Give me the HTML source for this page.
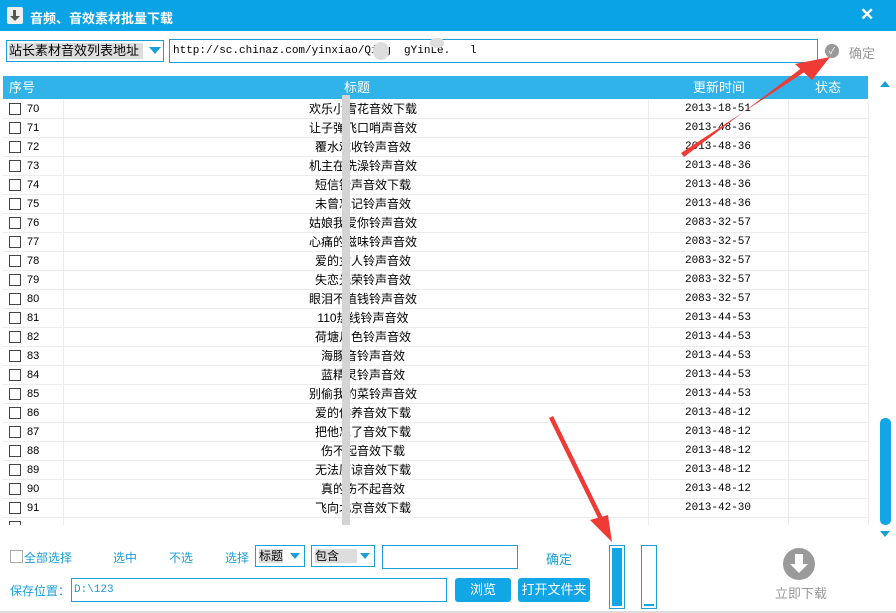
<!DOCTYPE html>
<html><head><meta charset="utf-8"><style>
*{margin:0;padding:0;box-sizing:border-box}
body{width:896px;height:613px;overflow:hidden;background:#fff;font-family:"Liberation Sans","Noto Sans CJK SC",sans-serif;font-size:12px;position:relative;color:#000}
.a{position:absolute}
.title{left:0;top:0;width:896px;height:31px;background:#0aa3e6;color:#fff;font-weight:bold;font-size:13px}
.row{position:absolute;left:3px;width:865px;height:19px;border-bottom:1px solid #ececec;line-height:19px;font-size:12px}
.cb{position:absolute;left:6px;top:3px;width:12px;height:12px;border:1px solid #444;background:#fff}
.num{position:absolute;left:24px;font-family:"Liberation Sans",sans-serif;font-size:11px}
.t{position:absolute;left:260px;width:200px;text-align:center}
.tm{position:absolute;left:645px;width:140px;text-align:center;font-family:"Liberation Mono",monospace;font-size:11px}
.blue{color:#1a9fd8}
.btn{background:#12a6e6;color:#fff;border-radius:3px;text-align:center;line-height:24px;font-size:13px}
</style></head><body>
<div class="a title">
 <div class="a" style="left:7px;top:7px;width:16px;height:17px;background:#eee;border-radius:2px"><div class="a" style="left:6px;top:3px;width:3px;height:7px;background:#555"></div><div class="a" style="left:3px;top:9px;border:5px solid transparent;border-top:5px solid #555;width:0;height:0"></div></div>
 <div class="a" style="left:30px;top:8px">音频、音效素材批量下载</div>
 <div class="a" style="left:860px;top:5px;font-size:17px">✕</div>
</div>
<div class="a" style="left:6px;top:40px;width:158px;height:22px;border:1px solid #1a9fd8"></div>
<div class="a" style="left:9px;top:43px;width:134px;height:16px;background:#ddd;font-size:13px;line-height:16px">站长素材音效列表地址</div>
<div class="a" style="left:149px;top:47px;border:6px solid transparent;border-top:7px solid #1a9fd8;width:0;height:0"></div>
<div class="a" style="left:169px;top:39px;width:649px;height:24px;border:1px solid #1a9fd8;font-family:'Liberation Mono',monospace;font-size:11px;line-height:22px;padding-left:3px;white-space:pre">http://sc.chinaz.com/yinxiao/Qing  gYinLe.   l</div>
<div class="a" style="left:373px;top:42px;width:16px;height:18px;background:#ddd;border-radius:8px"></div>
<div class="a" style="left:430px;top:38px;width:14px;height:10px;background:#ddd;border-radius:7px"></div>
<div class="a" style="left:825px;top:44px;width:14px;height:14px;border-radius:7px;background:#999;color:#fff;font-size:9px;line-height:14px;text-align:center">✓</div>
<div class="a" style="left:849px;top:43px;color:#999;font-size:13px">确定</div>
<div class="a" style="left:3px;top:76px;width:865px;height:23px;background:#2fb3e8;color:#fff;font-size:13px;line-height:23px">
 <span class="a" style="left:6px">序号</span><span class="a" style="left:341px">标题</span><span class="a" style="left:690px">更新时间</span><span class="a" style="left:812px">状态</span>
</div>
<div class="a" style="left:880px;top:76px;border:5px solid transparent;border-bottom:6px solid #1a9fd8;width:0;height:0"></div>
<div class="a" style="left:880px;top:531px;border:5px solid transparent;border-top:6px solid #1a9fd8;width:0;height:0"></div>
<div class="a" style="left:880px;top:418px;width:11px;height:107px;background:#12a6e6;border-radius:5px"></div>
<div class="a" style="left:63px;top:100px;width:1px;height:425px;background:#ececec"></div>
<div class="a" style="left:648px;top:100px;width:1px;height:425px;background:#ececec"></div>
<div class="a" style="left:788px;top:100px;width:1px;height:425px;background:#ececec"></div>
<div class="a" style="left:868px;top:100px;width:1px;height:425px;background:#ececec"></div>
<div id="rows"></div>
<script>
var d=[["欢乐小雪花音效下载","2013-18-51"],["让子弹飞口哨声音效","2013-48-36"],["覆水难收铃声音效","2013-48-36"],["机主在洗澡铃声音效","2013-48-36"],["短信铃声音效下载","2013-48-36"],["未曾忘记铃声音效","2013-48-36"],["姑娘我爱你铃声音效","2083-32-57"],["心痛的滋味铃声音效","2083-32-57"],["爱的女人铃声音效","2083-32-57"],["失恋光荣铃声音效","2083-32-57"],["眼泪不值钱铃声音效","2083-32-57"],["110热线铃声音效","2013-44-53"],["荷塘月色铃声音效","2013-44-53"],["海豚音铃声音效","2013-44-53"],["蓝精灵铃声音效","2013-44-53"],["别偷我的菜铃声音效","2013-44-53"],["爱的供养音效下载","2013-48-12"],["把他忘了音效下载","2013-48-12"],["伤不起音效下载","2013-48-12"],["无法原谅音效下载","2013-48-12"],["真的伤不起音效","2013-48-12"],["飞向北京音效下载","2013-42-30"]];
var h="";for(var i=0;i<d.length;i++){h+='<div class="row" style="top:'+(100+i*19)+'px"><div class="cb"></div><span class="num">'+(70+i)+'</span><span class="t">'+d[i][0]+'</span><span class="tm">'+d[i][1]+'</span></div>';}
h+='<div class="a" style="left:9px;top:521px;width:12px;height:4px;border:1px solid #444;border-bottom:none"></div>';
document.getElementById("rows").innerHTML=h;
</script>
<div class="a" style="left:342px;top:95px;width:8px;height:430px;background:#d4d4d4"></div>
<div class="a" style="left:10px;top:550px;width:13px;height:13px;border:1px solid #aaa"></div>
<div class="a blue" style="left:24px;top:549px;font-size:12px">全部选择</div>
<div class="a blue" style="left:113px;top:549px">选中</div>
<div class="a blue" style="left:169px;top:549px">不选</div>
<div class="a blue" style="left:225px;top:549px">选择</div>
<div class="a" style="left:255px;top:545px;width:50px;height:22px;border:1px solid #1a9fd8"><span class="a" style="left:3px;top:3px;background:#ddd;line-height:14px;font-size:12px">标题</span><div class="a" style="left:34px;top:7px;border:5px solid transparent;border-top:6px solid #1a9fd8;width:0;height:0"></div></div>
<div class="a" style="left:311px;top:545px;width:64px;height:22px;border:1px solid #1a9fd8"><span class="a" style="left:3px;top:3px;width:42px;background:#ddd;line-height:14px;font-size:12px">包含</span><div class="a" style="left:48px;top:7px;border:5px solid transparent;border-top:6px solid #1a9fd8;width:0;height:0"></div></div>
<div class="a" style="left:382px;top:545px;width:136px;height:24px;border:1px solid #1a9fd8"></div>
<div class="a blue" style="left:546px;top:549px;font-size:13px">确定</div>
<div class="a blue" style="left:10px;top:582px;font-size:12px">保存位置：</div>
<div class="a" style="left:71px;top:578px;width:376px;height:24px;border:1px solid #1a9fd8;color:#1a9fd8;font-family:'Liberation Mono',monospace;font-size:11px;line-height:22px;padding-left:2px">D:\123</div>
<div class="a btn" style="left:455px;top:578px;width:56px;height:24px">浏览</div>
<div class="a btn" style="left:518px;top:578px;width:72px;height:24px">打开文件夹</div>
<div class="a" style="left:609px;top:545px;width:16px;height:64px;border:1px solid #1a9fd8;padding:2px"><div style="width:100%;height:100%;background:#12a6e6"></div></div>
<div class="a" style="left:641px;top:545px;width:16px;height:64px;border:1px solid #1a9fd8"><div class="a" style="left:2px;bottom:2px;width:10px;height:2px;background:#12a6e6"></div></div>
<div class="a" style="left:783px;top:548px;width:32px;height:32px;border-radius:16px;background:#9a9a9a"></div>
<div class="a" style="left:795px;top:554px;width:8px;height:11px;background:#fff"></div>
<div class="a" style="left:790px;top:564px;border:9px solid transparent;border-top:9px solid #fff;border-bottom:none;width:0;height:0"></div>
<div class="a" style="left:775px;top:583px;color:#999;font-size:13px">立即下载</div>
<div class="a" style="left:0;top:611px;width:896px;height:2px;background:#ddd"></div>
<svg class="a" style="left:0;top:0" width="896" height="613">
<g fill="#ef3a36">
<polygon points="681,153 806,71 803,67 684,157"/>
<polygon points="830,57 795,64 812,80"/>
<polygon points="549,418 599,520 603,518 553,416"/>
<polygon points="612,542 590,520 608,515"/>
</g>
</svg>
</body></html>
